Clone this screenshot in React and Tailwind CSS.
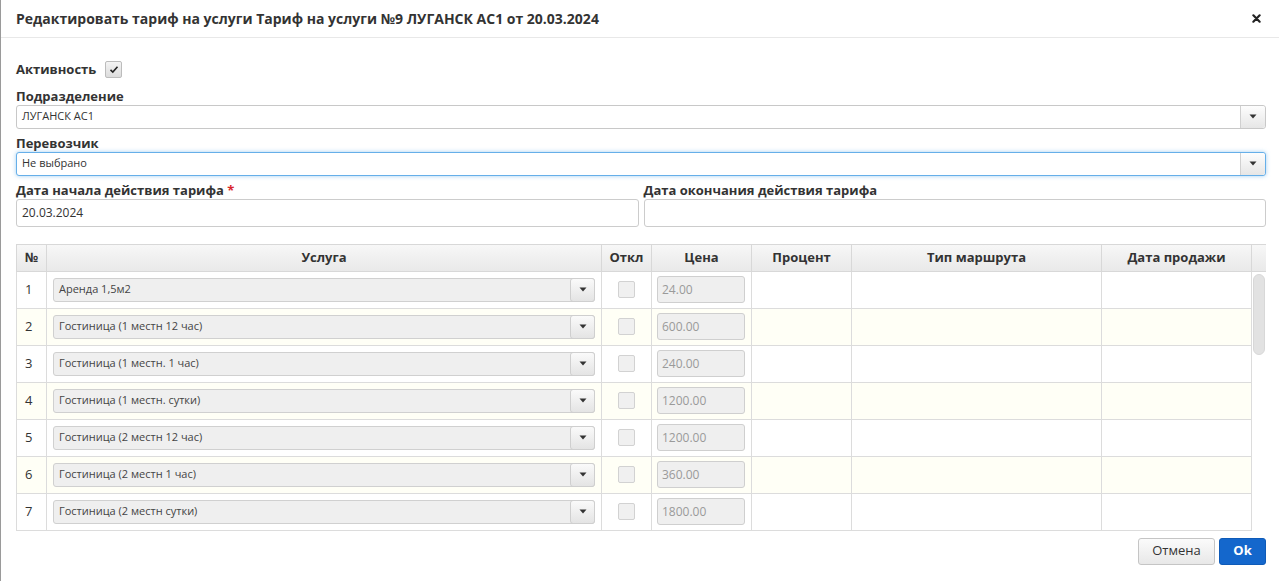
import React from 'react';

const rows = [
  { n: 1, name: 'Аренда 1,5м2', price: '24.00' },
  { n: 2, name: 'Гостиница (1 местн 12 час)', price: '600.00' },
  { n: 3, name: 'Гостиница (1 местн. 1 час)', price: '240.00' },
  { n: 4, name: 'Гостиница (1 местн. сутки)', price: '1200.00' },
  { n: 5, name: 'Гостиница (2 местн 12 час)', price: '1200.00' },
  { n: 6, name: 'Гостиница (2 местн 1 час)', price: '360.00' },
  { n: 7, name: 'Гостиница (2 местн сутки)', price: '1800.00' },
];

function Caret() {
  return (
    <svg width="8" height="5" viewBox="0 0 8 5">
      <path d="M0.5 0.5 L7.5 0.5 L4 4.5 Z" fill="#333" />
    </svg>
  );
}

function Select({ value, focused }) {
  return (
    <div
      className={
        'flex h-[24px] items-stretch rounded-[3px] border bg-white ' +
        (focused ? 'border-[#66afe9] shadow-[0_0_4px_rgba(102,175,233,0.6)]' : 'border-[#c8c8c8]')
      }
    >
      <div className="flex flex-1 items-center pl-[5px] text-[11px] text-[#333]">{value}</div>
      <div className="flex w-[25px] items-center justify-center rounded-r-[3px] border-l border-[#d0d0d0] bg-gradient-to-b from-[#fdfdfd] to-[#e6e6e6]">
        <Caret />
      </div>
    </div>
  );
}

function RowSelect({ value }) {
  return (
    <div className="flex h-[24px] items-stretch rounded-[3px] border border-[#d0d0d0] bg-[#efefef]">
      <div className="flex flex-1 items-center pl-[5px] text-[11px] text-[#444]">{value}</div>
      <div className="flex w-[25px] items-center justify-center rounded-[3px] border border-[#cfcfcf] bg-gradient-to-b from-[#fafafa] to-[#e4e4e4] -my-px -mr-px">
        <Caret />
      </div>
    </div>
  );
}

const th = 'flex items-center justify-center border-r border-[#d8d8d8] text-[13px] font-bold text-[#333]';

export default function App() {
  return (
    <div
      className="relative h-[581px] w-[1279px] overflow-hidden border-l border-[#9a9a9a] bg-white text-[#333]"
      style={{ fontFamily: '"Open Sans", "Noto Sans", sans-serif' }}
    >
      {/* header */}
      <div className="flex h-[38px] items-center justify-between border-b border-[#e8e8e8] pl-[15px] pr-[18px]">
        <div className="text-[14px] font-bold text-[#333]">
          Редактировать тариф на услуги Тариф на услуги №9 ЛУГАНСК АС1 от 20.03.2024
        </div>
        <svg width="9" height="9" viewBox="0 0 10 10">
          <path d="M1.5 1.5 L8.5 8.5 M8.5 1.5 L1.5 8.5" stroke="#222" strokeWidth="2.4" strokeLinecap="round" />
        </svg>
      </div>

      <div className="pl-[15px] pr-[13px]">
        <div className="mt-[22px] flex items-center gap-[9px]">
          <span className="text-[13px] font-bold">Активность</span>
          <div className="flex h-[17px] w-[17px] items-center justify-center rounded-[2px] border border-[#bcbcbc] bg-gradient-to-b from-[#f4f4f4] to-[#dcdcdc]">
            <svg width="10" height="9" viewBox="0 0 10 9">
              <path d="M1.5 4.8 L3.8 7 L8.5 1.8" stroke="#222" strokeWidth="1.6" fill="none" />
            </svg>
          </div>
        </div>

        <div className="mt-[7px] text-[13px] font-bold leading-[18px]">Подразделение</div>
        <Select value="ЛУГАНСК АС1" />

        <div className="mt-[5px] text-[13px] font-bold leading-[18px]">Перевозчик</div>
        <Select value="Не выбрано" focused />

        <div className="mt-[5px] flex gap-[5px]">
          <div className="flex-1">
            <div className="text-[13px] font-bold leading-[18px]">
              Дата начала действия тарифа <span className="text-[#d9262c]">*</span>
            </div>
            <div className="flex h-[28px] items-center rounded-[3px] border border-[#cccccc] pl-[5px] text-[12px]">
              20.03.2024
            </div>
          </div>
          <div className="flex-1">
            <div className="text-[13px] font-bold leading-[18px]">Дата окончания действия тарифа</div>
            <div className="h-[28px] rounded-[3px] border border-[#cccccc]" />
          </div>
        </div>

        {/* table */}
        <div className="mt-[17px] h-[288px] overflow-hidden">
          <div className="flex h-[28px] items-stretch border-y border-[#d8d8d8] bg-gradient-to-b from-[#f7f7f7] to-[#e9e9e9]">
            <div className={th + ' w-[31px] border-l'}>№</div>
            <div className={th + ' w-[555px]'}>Услуга</div>
            <div className={th + ' w-[50px]'}>Откл</div>
            <div className={th + ' w-[100px]'}>Цена</div>
            <div className={th + ' w-[100px]'}>Процент</div>
            <div className={th + ' w-[250px]'}>Тип маршрута</div>
            <div className={th + ' w-[150px]'}>Дата продажи</div>
            <div className="flex-1" />
          </div>
          <div className="flex">
            <div className="w-[1236px]">
              {rows.map((r) => (
                <div
                  key={r.n}
                  className={
                    'flex h-[37px] items-stretch border-b border-[#dcdcdc] ' +
                    (r.n % 2 === 0 ? 'bg-[#fffff6]' : 'bg-white')
                  }
                >
                  <div className="flex w-[31px] items-center border-x border-[#dcdcdc] pl-[8px] text-[13px] text-[#333]">
                    {r.n}
                  </div>
                  <div className="w-[555px] border-r border-[#dcdcdc] px-[6px] pt-[6px]">
                    <RowSelect value={r.name} />
                  </div>
                  <div className="flex w-[50px] items-center justify-center border-r border-[#dcdcdc]">
                    <div className="h-[17px] w-[17px] rounded-[2px] border border-[#d2d2d2] bg-[#f0f0f0]" />
                  </div>
                  <div className="flex w-[100px] items-center border-r border-[#dcdcdc] pl-[5px]">
                    <div className="flex h-[27px] w-[88px] items-center rounded-[3px] border border-[#cfcfcf] bg-[#efefef] pl-[4px] text-[12px] text-[#9a9a9a]">
                      {r.price}
                    </div>
                  </div>
                  <div className="w-[100px] border-r border-[#dcdcdc]" />
                  <div className="w-[250px] border-r border-[#dcdcdc]" />
                  <div className="w-[150px] border-r border-[#dcdcdc]" />
                </div>
              ))}
            </div>
            <div className="flex flex-1 justify-center pt-[2px]">
              <div className="h-[81px] w-[12px] rounded-[6px] border border-[#d8d8d8] bg-[#e2e2e2]" />
            </div>
          </div>
        </div>

        {/* footer */}
        <div className="mt-[6px] flex justify-end gap-[4px]">
          <button className="h-[27px] w-[77px] rounded-[3px] border border-[#c5c5c5] bg-gradient-to-b from-[#fbfbfb] to-[#e8e8e8] text-[13px] text-[#333]">
            Отмена
          </button>
          <button className="h-[27px] w-[47px] rounded-[3px] border border-[#0f5bb8] bg-[#1467cc] text-[13px] font-bold text-white">
            Ok
          </button>
        </div>
      </div>
    </div>
  );
}
